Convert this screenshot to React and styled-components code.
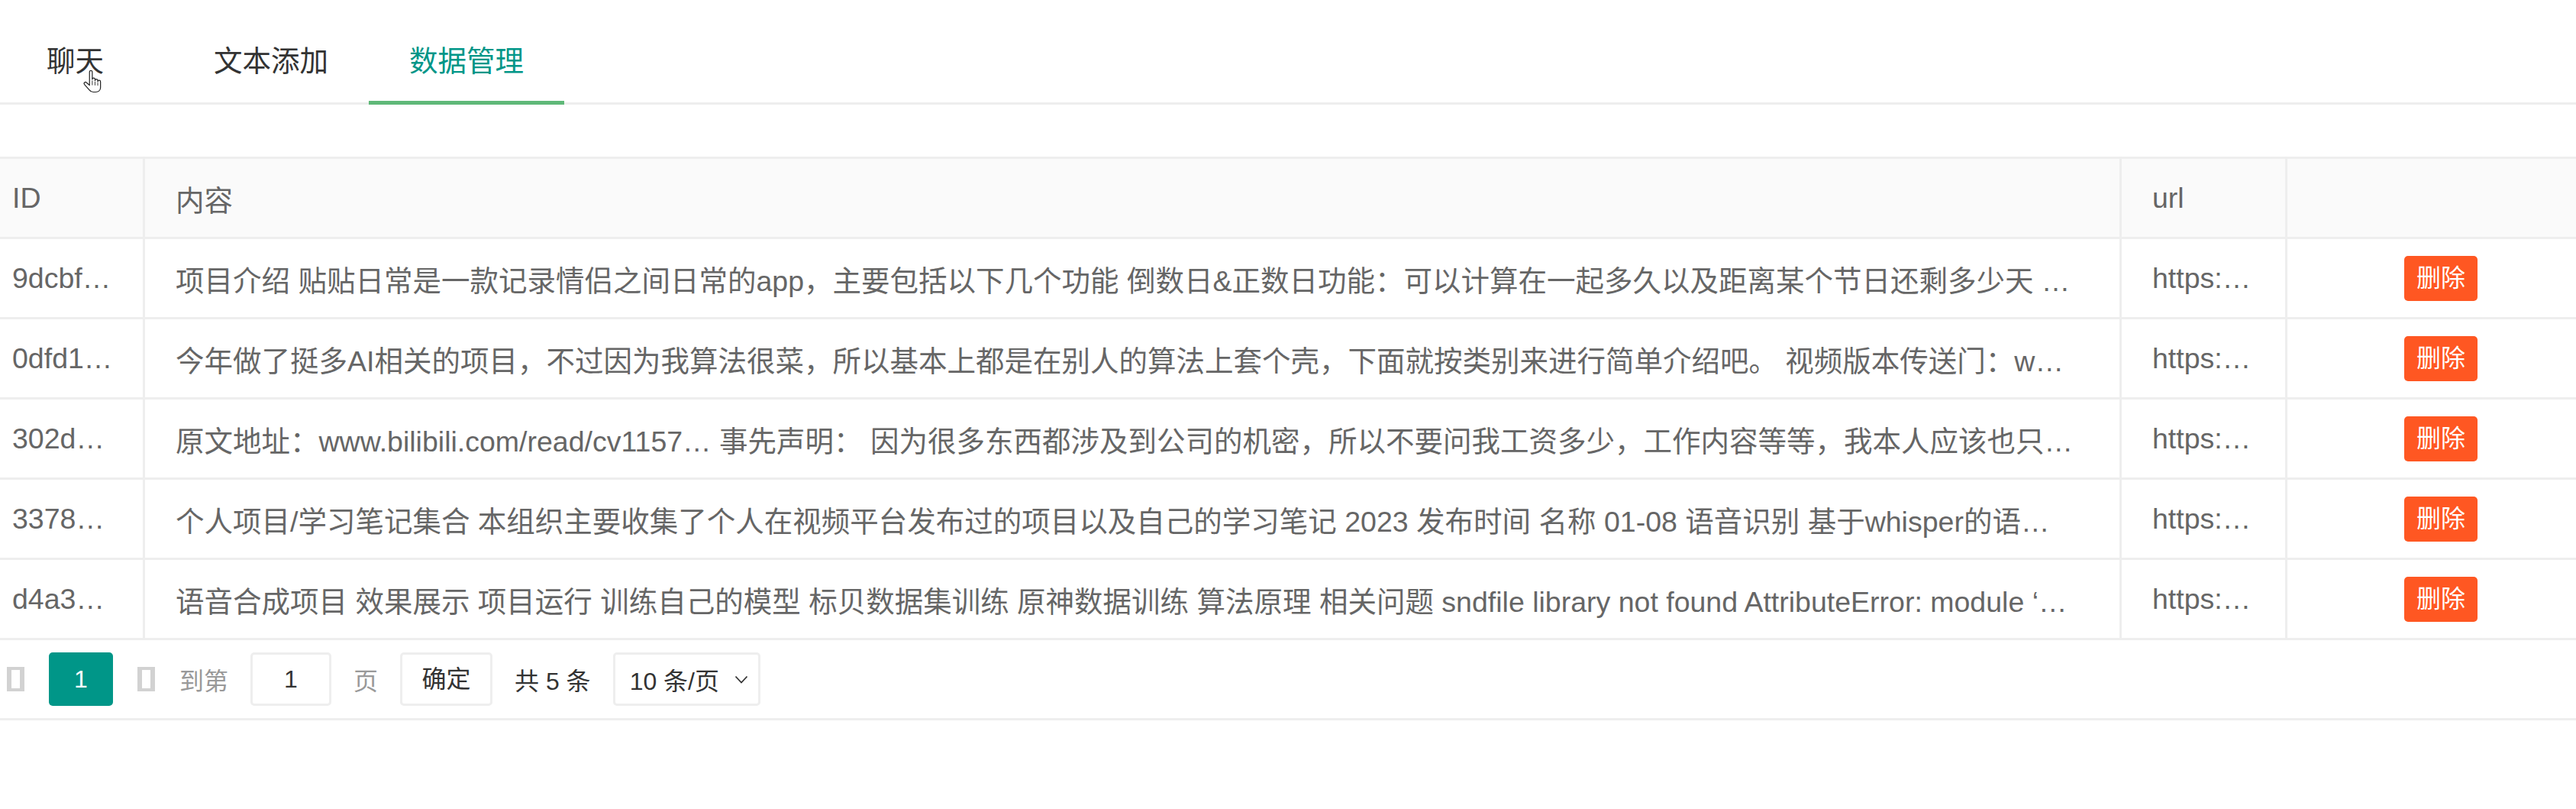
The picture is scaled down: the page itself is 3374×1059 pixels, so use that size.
import React from 'react'
import styled, { createGlobalStyle } from 'styled-components'

const GlobalStyle = createGlobalStyle`
  * { box-sizing: border-box; }
  html, body {
    margin: 0;
    padding: 0;
    background: #fff;
    overflow: hidden;
  }
  body {
    font-family: "Liberation Sans", "Noto Sans CJK SC", sans-serif;
    color: #333;
  }
`

const rows = [
    { id: '9dcbf…', content: '项目介绍 贴贴日常是一款记录情侣之间日常的app，主要包括以下几个功能 倒数日&正数日功能：可以计算在一起多久以及距离某个节日还剩多少天 …' },
    { id: '0dfd1…', content: '今年做了挺多AI相关的项目，不过因为我算法很菜，所以基本上都是在别人的算法上套个壳，下面就按类别来进行简单介绍吧。 视频版本传送门：w…' },
    { id: '302d…', content: '原文地址：www.bilibili.com/read/cv1157… 事先声明： 因为很多东西都涉及到公司的机密，所以不要问我工资多少，工作内容等等，我本人应该也只…' },
    { id: '3378…', content: '个人项目/学习笔记集合 本组织主要收集了个人在视频平台发布过的项目以及自己的学习笔记 2023 发布时间 名称 01-08 语音识别 基于whisper的语…' },
    { id: 'd4a3…', content: '语音合成项目 效果展示 项目运行 训练自己的模型 标贝数据集训练 原神数据训练 算法原理 相关问题 sndfile library not found AttributeError: module ‘…' },
]

const HandCursor = () => (
    <Cursor width="26" height="30" viewBox="0 0 17 20">
        <path
            d="M6 1.5a1.2 1.2 0 0 1 2.4 0V8a1.2 1.2 0 0 1 2.4 0v1a1.2 1.2 0 0 1 2.4 0v1a1.2 1.2 0 0 1 2.4 0V15c0 2.5-1.8 4-4.2 4H9.3c-1.6 0-2.6-.7-3.4-1.8L1.6 12.4a1.2 1.2 0 0 1 1.8-1.6L6 13Z"
            fill="#fff"
            stroke="#222"
            strokeWidth="0.8"
            strokeLinejoin="round"
        />
        <path d="M8.4 9v4M10.8 9.8v3.4M13.2 10.8v2.6" stroke="#222" strokeWidth="0.6" />
    </Cursor>
)

const App = () => {
    return (
        <Page>
            <GlobalStyle />
            <TabBar>
                <Tab $gap="38px">
                    聊天
                    <HandCursor />
                </Tab>
                <Tab>文本添加</Tab>
                <Tab $active>数据管理</Tab>
            </TabBar>

            <TableWrap>
                <Table>
                    <colgroup>
                        <col style={{ width: 190 }} />
                        <col style={{ width: 2589 }} />
                        <col style={{ width: 217 }} />
                        <col style={{ width: 405 }} />
                    </colgroup>
                    <thead>
                        <tr>
                            <Th $first>ID</Th>
                            <Th>内容</Th>
                            <Th>url</Th>
                            <Th></Th>
                        </tr>
                    </thead>
                    <tbody>
                        {rows.map((item) => (
                            <tr key={item.id}>
                                <Td $first><Cell>{item.id}</Cell></Td>
                                <Td><Cell>{item.content}</Cell></Td>
                                <Td><Cell>https:…</Cell></Td>
                                <Td $center>
                                    <DangerBtn>删除</DangerBtn>
                                </Td>
                            </tr>
                        ))}
                    </tbody>
                </Table>
            </TableWrap>

            <Pager>
                <IconSlot><Tofu /></IconSlot>
                <PageNum>1</PageNum>
                <IconSlot><Tofu /></IconSlot>
                <PagerText $color="#999">到第</PagerText>
                <PagerBox $width="106px">1</PagerBox>
                <PagerText $color="#999">页</PagerText>
                <PagerBox $width="121px">确定</PagerBox>
                <PagerText>共 5 条</PagerText>
                <SelectBox>
                    <span>10 条/页</span>
                    <svg width="18" height="11" viewBox="0 0 18 11">
                        <polyline points="1.5,1.5 9,9.5 16.5,1.5" fill="none" stroke="#333" strokeWidth="1.8" />
                    </svg>
                </SelectBox>
            </Pager>
        </Page>
    )
}

const Page = styled.div`
  width: 3374px;
  height: 1059px;
  overflow: hidden;
`
const TabBar = styled.ul`
  list-style: none;
  margin: 27px 0 0 0;
  padding: 0 0 0 8px;
  height: 110px;
  display: flex;
  border-bottom: 3px solid #eee;
`
const Tab = styled.li`
  position: relative;
  height: 107px;
  line-height: 107px;
  padding: 0 53px;
  margin-right: ${(props) => props.$gap || '0'};
  font-size: 37.5px;
  color: ${(props) => (props.$active ? '#009688' : '#333')};
  white-space: nowrap;
  &::after {
    content: '';
    display: ${(props) => (props.$active ? 'block' : 'none')};
    position: absolute;
    left: 0;
    right: 0;
    bottom: -3px;
    height: 5px;
    background: #5fb878;
  }
`
const Cursor = styled.svg`
  position: absolute;
  left: 100px;
  top: 65px;
`
const TableWrap = styled.div`
  margin-top: 68px;
  width: 3374px;
  overflow: hidden;
`
const Table = styled.table`
  width: 3401px;
  table-layout: fixed;
  border-collapse: separate;
  border-spacing: 0;
  border-top: 3px solid #eee;
  font-size: 37.5px;
  color: #666;
`
const Th = styled.th`
  height: 105px;
  padding: 0 ${(props) => (props.$first ? '28px' : '40px')} 0 ${(props) => (props.$first ? '16px' : '40px')};
  text-align: left;
  font-weight: 400;
  background: #fafafa;
  border-right: 3px solid #eee;
  border-bottom: 3px solid #eee;
  white-space: nowrap;
`
const Td = styled.td`
  height: 105px;
  padding: 0 ${(props) => (props.$first ? '28px' : '40px')} 0 ${(props) => (props.$first ? '16px' : '40px')};
  text-align: ${(props) => (props.$center ? 'center' : 'left')};
  border-right: 3px solid #eee;
  border-bottom: 3px solid #eee;
  background: #fff;
`
const Cell = styled.div`
  white-space: nowrap;
  overflow: hidden;
  text-overflow: ellipsis;
`
const DangerBtn = styled.button`
  height: 59px;
  padding: 0 16px;
  border: none;
  border-radius: 5px;
  background: #ff5722;
  color: #fff;
  font-family: inherit;
  font-size: 32px;
  line-height: 59px;
  cursor: pointer;
`
const Pager = styled.div`
  display: flex;
  align-items: center;
  gap: 29px;
  height: 105px;
  padding-left: 6px;
  border-bottom: 3px solid #eee;
  font-size: 32px;
  color: #333;
`
const IconSlot = styled.span`
  width: 29px;
  display: flex;
  justify-content: center;
`
const Tofu = styled.span`
  display: block;
  width: 23px;
  height: 32px;
  border-style: solid;
  border-color: #d2d2d2;
  border-width: 4px 6px;
`
const PageNum = styled.span`
  width: 84px;
  height: 70px;
  line-height: 70px;
  text-align: center;
  border-radius: 5px;
  background: #009688;
  color: #fff;
`
const PagerText = styled.span`
  color: ${(props) => props.$color || '#333'};
  white-space: nowrap;
`
const PagerBox = styled.span`
  width: ${(props) => props.$width};
  height: 70px;
  line-height: 64px;
  text-align: center;
  border: 3px solid #eee;
  border-radius: 5px;
  color: #333;
`
const SelectBox = styled.span`
  width: 193px;
  height: 70px;
  display: flex;
  align-items: center;
  gap: 20px;
  padding: 0 10px 0 19px;
  border: 3px solid #eee;
  border-radius: 5px;
  white-space: nowrap;
`

export default App
